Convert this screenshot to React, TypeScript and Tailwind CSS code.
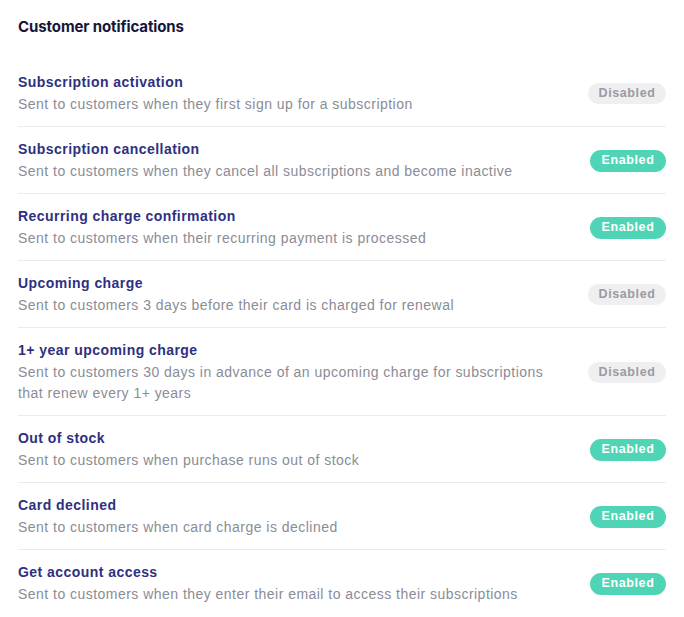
const notifications = [
  { title: 'Subscription activation', desc: 'Sent to customers when they first sign up for a subscription', enabled: false },
  { title: 'Subscription cancellation', desc: 'Sent to customers when they cancel all subscriptions and become inactive', enabled: true },
  { title: 'Recurring charge confirmation', desc: 'Sent to customers when their recurring payment is processed', enabled: true },
  { title: 'Upcoming charge', desc: 'Sent to customers 3 days before their card is charged for renewal', enabled: false },
  {
    title: '1+ year upcoming charge',
    desc: 'Sent to customers 30 days in advance of an upcoming charge for subscriptions that renew every 1+ years',
    enabled: false,
  },
  { title: 'Out of stock', desc: 'Sent to customers when purchase runs out of stock', enabled: true },
  { title: 'Card declined', desc: 'Sent to customers when card charge is declined', enabled: true },
  { title: 'Get account access', desc: 'Sent to customers when they enter their email to access their subscriptions', enabled: true },
];

function StatusBadge({ enabled }: { enabled: boolean }) {
  return enabled ? (
    <span className="inline-flex h-[22px] w-[76px] shrink-0 items-center justify-center rounded-full bg-[#4fd5b5] text-[12.5px] font-bold tracking-[0.6px] text-white">
      Enabled
    </span>
  ) : (
    <span className="inline-flex h-[21px] w-[78px] shrink-0 items-center justify-center rounded-full bg-[#efeff1] text-[12.5px] font-bold tracking-[0.6px] text-[#9b9ba3]">
      Disabled
    </span>
  );
}

export default function App() {
  return (
    <div className="min-h-screen bg-white px-[18px] pt-[17px] font-['Liberation_Sans',Arial,sans-serif]">
      <h2 className="font-['Inter',sans-serif] text-[15px] font-bold leading-5 tracking-[-0.1px] text-[#16163a]">
        Customer notifications
      </h2>

      <div className="mt-[23px]">
        {notifications.map((n, i) => (
          <div
            key={n.title}
            className={`flex items-center justify-between gap-6 pt-3 pb-[11px] ${i > 0 ? 'border-t border-[#ebebed]' : ''}`}
          >
            <div className="flex max-w-[540px] flex-col gap-[2px]">
              <h3 className="text-[14px] font-bold leading-5 tracking-[0.45px] text-[#2e3080]">{n.title}</h3>
              <p className="text-[14px] leading-[21px] tracking-[0.47px] text-[#8a8c96]">{n.desc}</p>
            </div>
            <StatusBadge enabled={n.enabled} />
          </div>
        ))}
      </div>
    </div>
  );
}
